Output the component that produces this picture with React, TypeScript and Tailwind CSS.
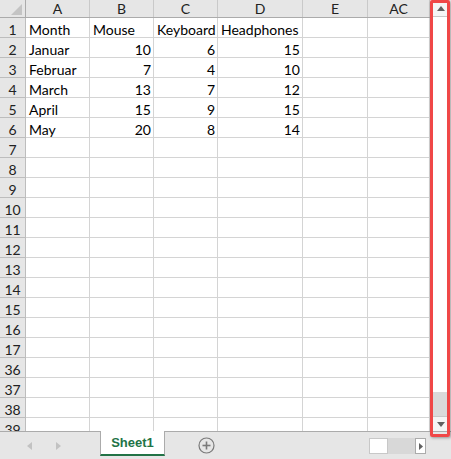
import React from "react";

const cols = [
  { key: "A", w: "w-[64px]" },
  { key: "B", w: "w-[64px]" },
  { key: "C", w: "w-[64px]" },
  { key: "D", w: "w-[85px]" },
  { key: "E", w: "w-[65px]" },
  { key: "AC", w: "w-[62px]" },
];

type Cell = { v: string; num?: boolean };
const data: Record<string, Cell[]> = {
  "1": [{ v: "Month" }, { v: "Mouse" }, { v: "Keyboard" }, { v: "Headphones" }],
  "2": [{ v: "Januar" }, { v: "10", num: true }, { v: "6", num: true }, { v: "15", num: true }],
  "3": [{ v: "Februar" }, { v: "7", num: true }, { v: "4", num: true }, { v: "10", num: true }],
  "4": [{ v: "March" }, { v: "13", num: true }, { v: "7", num: true }, { v: "12", num: true }],
  "5": [{ v: "April" }, { v: "15", num: true }, { v: "9", num: true }, { v: "15", num: true }],
  "6": [{ v: "May" }, { v: "20", num: true }, { v: "8", num: true }, { v: "14", num: true }],
};

const rows = ["1", "2", "3", "4", "5", "6", "7", "8", "9", "10", "11", "12", "13", "14", "15", "16", "17", "36", "37", "38", "39"];

export default function App() {
  return (
    <div
      className="relative w-[451px] h-[459px] overflow-hidden bg-white text-[#000]"
      style={{ fontFamily: "Lato, 'Liberation Sans', sans-serif" }}
    >
      <div className="flex h-[431px]">
        {/* Grid */}
        <div className="w-[430px] h-[431px] overflow-hidden">
          {/* Header row */}
          <div className="flex h-[18px] bg-[#e6e6e6] border-b border-[#ababab]">
            <div className="relative w-[26px] h-[17px] border-r border-[#ababab]">
              <svg className="absolute left-0 top-0" width="25" height="17" viewBox="0 0 25 17">
                <polygon points="11,15 22,15 22,4" fill="#c4c4c4" />
              </svg>
            </div>
            {cols.map((c) => (
              <div
                key={c.key}
                className={`${c.w} h-[17px] shrink-0 border-r border-[#c9c9c9] flex items-center justify-center text-[14px] leading-[17px] text-[#222]`}
              >
                {c.key}
              </div>
            ))}
          </div>
          {rows.map((r) => (
            <div key={r} className="flex h-[20px] shrink-0">
              <div className="w-[26px] h-[20px] shrink-0 bg-[#e6e6e6] border-r border-b border-[#bdbdbd] text-center text-[14px] leading-[19px] pt-[2px] text-[#222]">
                {r}
              </div>
              {cols.map((c, i) => {
                const cell = data[r]?.[i];
                return (
                  <div
                    key={c.key}
                    className={`${c.w} h-[20px] shrink-0 border-r border-b border-[#d4d4d4] text-[14px] leading-[19px] pt-[2px] whitespace-nowrap ${
                      cell?.num ? "text-right pr-[2px]" : "pl-[3px]"
                    }`}
                  >
                    {cell?.v ?? ""}
                  </div>
                );
              })}
            </div>
          ))}
        </div>

        {/* Vertical scrollbar */}
        <div className="w-[21px] h-[431px] bg-[#f0f0f0] flex flex-col items-center">
          <div className="w-[17px] flex-1 flex flex-col bg-white border-x border-[#dcdcdc]">
            <div className="h-[17px] flex items-center justify-center bg-[#f5f5f5] border-b border-[#c8c8c8]">
              <svg width="8" height="5" viewBox="0 0 8 5">
                <polygon points="0,5 8,5 4,0" fill="#606060" />
              </svg>
            </div>
            <div className="flex-1 bg-white" />
            <div className="h-[24px] bg-[#dadada]" />
            <div className="h-[15px] flex items-center justify-center bg-[#f5f5f5] border-t border-[#c8c8c8]">
              <svg width="8" height="5" viewBox="0 0 8 5">
                <polygon points="0,0 8,0 4,5" fill="#606060" />
              </svg>
            </div>
          </div>
        </div>
      </div>

      {/* Sheet tab bar */}
      <div className="flex items-start h-[28px] bg-[#e6e6e6] border-t border-[#ababab]">
        <div className="w-[100px] h-[27px] flex items-center">
          <svg className="ml-[27px]" width="5" height="8" viewBox="0 0 5 8">
            <polygon points="5,0 5,8 0,4" fill="#c2c2c2" />
          </svg>
          <svg className="ml-[24px]" width="5" height="8" viewBox="0 0 5 8">
            <polygon points="0,0 0,8 5,4" fill="#c2c2c2" />
          </svg>
        </div>
        <div className="-mt-px w-[65px] h-[25px] bg-white border-x border-[#ababab] border-b-2 border-b-[#217346] flex items-center justify-center">
          <span
            className="text-[13px] font-bold text-[#217346] leading-none"
            style={{ fontFamily: "'Liberation Sans', Arial, sans-serif" }}
          >
            Sheet1
          </span>
        </div>
        <div className="h-[27px] flex items-center ml-[33px]">
          <svg width="17" height="17" viewBox="0 0 17 17">
            <circle cx="8.5" cy="8.5" r="7.5" fill="none" stroke="#7a7a7a" strokeWidth="1.2" />
            <line x1="4.5" y1="8.5" x2="12.5" y2="8.5" stroke="#7a7a7a" strokeWidth="1.6" />
            <line x1="8.5" y1="4.5" x2="8.5" y2="12.5" stroke="#7a7a7a" strokeWidth="1.6" />
          </svg>
        </div>
        <div className="flex-1" />
        <div className="mt-[6px] mr-[25px] flex h-[16px]">
          <div className="w-[19px] h-[16px] bg-white border border-[#c8c8c8]" />
          <div className="w-[27px] h-[16px] bg-[#d8d8d8]" />
          <div className="w-[11px] h-[16px] bg-white border border-[#ababab] flex items-center justify-center">
            <svg width="4" height="7" viewBox="0 0 4 7">
              <polygon points="0,0 0,7 4,3.5" fill="#606060" />
            </svg>
          </div>
        </div>
      </div>

      {/* Red annotation box over the scrollbar */}
      <div className="absolute left-[430px] top-0 w-[20px] h-[437px] border-[3px] border-[#f04747] rounded-[2px] shadow-[1px_1px_3px_rgba(0,0,0,0.35)] pointer-events-none" />
    </div>
  );
}
